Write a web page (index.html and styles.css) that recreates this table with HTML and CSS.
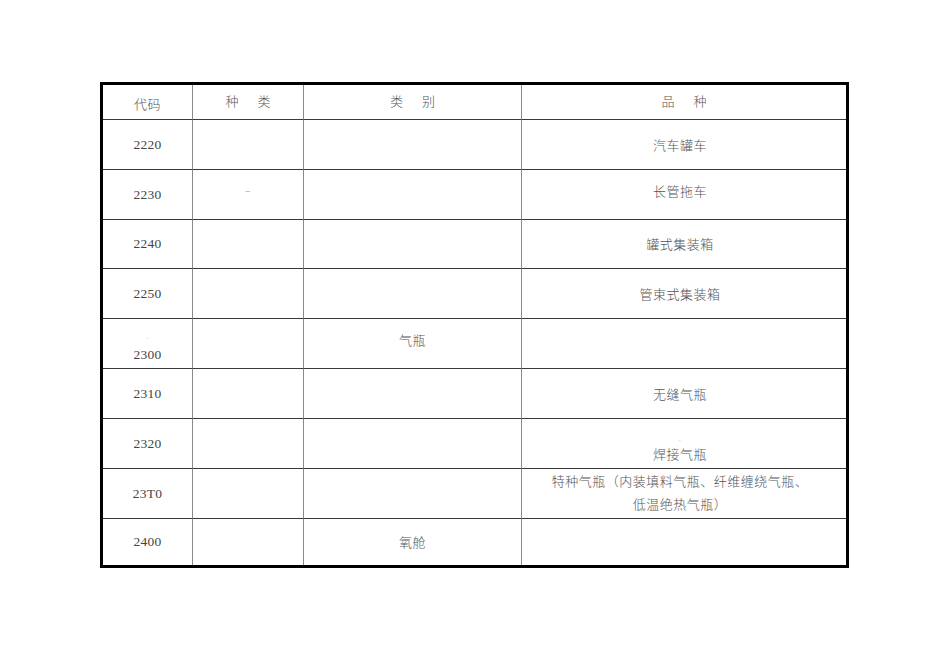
FILE: index.html
```html
<!DOCTYPE html>
<html lang="zh">
<head>
<meta charset="utf-8">
<title>气瓶品种代码表</title>
<link rel="stylesheet" href="styles.css">
</head>
<body>
<table class="codes">
  <colgroup>
    <col class="c1"><col class="c2"><col class="c3"><col class="c4">
  </colgroup>
  <thead>
    <tr class="head">
      <th class="h-code">代码</th>
      <th class="h-wide">种类</th>
      <th class="h-wide">类别</th>
      <th class="h-wide last">品种</th>
    </tr>
  </thead>
  <tbody>
    <tr>
      <td class="num">2220</td><td></td><td></td><td class="name last">汽车罐车</td>
    </tr>
    <tr>
      <td class="num">2230</td><td class="dash-cell"><span class="dash">–</span></td><td></td><td class="name last up">长管拖车</td>
    </tr>
    <tr class="short">
      <td class="num">2240</td><td></td><td></td><td class="name last">罐式集装箱</td>
    </tr>
    <tr>
      <td class="num">2250</td><td></td><td></td><td class="name last">管束式集装箱</td>
    </tr>
    <tr>
      <td class="num two"><span class="speck">·</span><br>2300</td><td></td><td class="name up">气瓶</td><td class="name last"></td>
    </tr>
    <tr>
      <td class="num">2310</td><td></td><td></td><td class="name last">无缝气瓶</td>
    </tr>
    <tr>
      <td class="num">2320</td><td></td><td></td><td class="name last two"><span class="speck">ˎ</span><br>焊接气瓶</td>
    </tr>
    <tr>
      <td class="num">23T0</td><td></td><td></td><td class="name last wrap">特种气瓶（内装填料气瓶、纤维缠绕气瓶、<br>低温绝热气瓶）</td>
    </tr>
    <tr class="final">
      <td class="num">2400</td><td></td><td class="name">氧舱</td><td class="name last"></td>
    </tr>
  </tbody>
</table>
</body>
</html>
```

FILE: styles.css
```css
html, body {
  margin: 0;
  padding: 0;
  background: #ffffff;
}

body {
  padding: 82px 0 0 100px;
}

.codes {
  box-sizing: border-box;
  width: 749px;
  table-layout: fixed;
  border-collapse: separate;
  border-spacing: 0;
  border: 3px solid #000000;
  font-family: "Noto Sans CJK SC", "Noto Sans", sans-serif;
  color: #555555;
}

.c1 { width: 90px; }
.c2 { width: 111px; }
.c3 { width: 218px; }
.c4 { width: 324px; }

.codes th,
.codes td {
  box-sizing: border-box;
  padding: 0;
  height: 50px;
  text-align: center;
  vertical-align: middle;
  border-right: 1px solid #8a8a8a;
  border-bottom: 1px solid #3a3a3a;
  font-weight: 300;
  font-size: 13px;
  line-height: 16px;
  letter-spacing: 0.5px;
}

.codes .last {
  border-right: none;
}

.codes tr.head th {
  height: 35px;
  padding-bottom: 3px;
}

.codes tr.head th.h-code {
  padding-bottom: 0;
  padding-top: 3px;
}

.codes tr.head th.h-wide {
  letter-spacing: 19px;
  padding-left: 19px;
}

.codes tr.short td {
  height: 49px;
}

.codes tr.final td {
  height: 46px;
  border-bottom: none;
}

.codes td.num {
  font-family: "Liberation Serif", "DejaVu Serif", serif;
  font-size: 13.5px;
  font-weight: 400;
  letter-spacing: 0.2px;
  color: #444444;
}

.codes td.name.last {
  padding-right: 8px;
}

.codes td.up {
  padding-bottom: 8px;
}

.codes td.num.two {
  padding-top: 5px;
}

.codes td.name.two {
  line-height: 17px;
}

.codes td.wrap {
  line-height: 23px;
  padding-bottom: 3px;
}

.speck {
  font-size: 8px;
  color: #b0b0b0;
}

.dash-cell {
  padding-bottom: 12px !important;
}

.dash {
  font-family: "Liberation Serif", serif;
  font-size: 9px;
  color: #777777;
}
```
